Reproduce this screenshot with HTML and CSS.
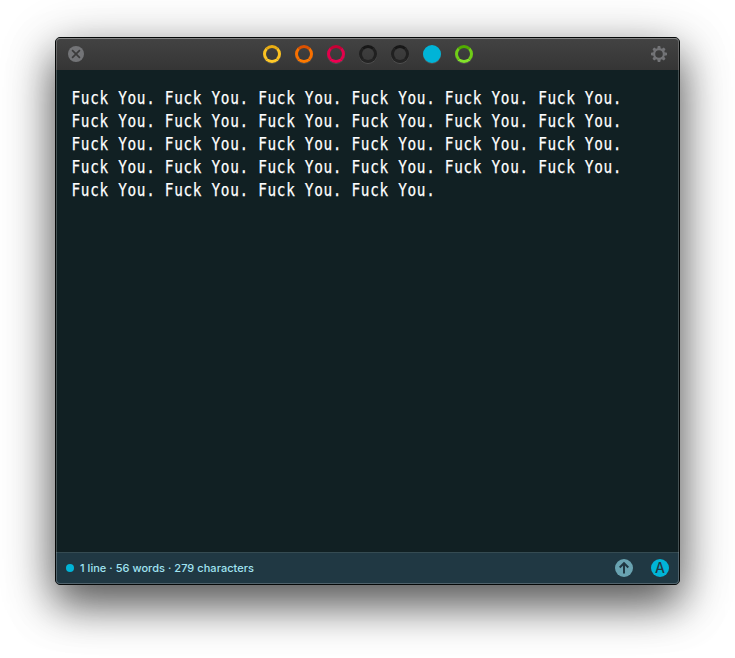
FILE: index.html
```html
<!DOCTYPE html>
<html lang="en">
<head>
<meta charset="utf-8">
<title>Notes</title>
<link rel="stylesheet" href="styles.css">
</head>
<body>
<main class="window">
  <header class="titlebar">
    <svg class="close" width="16" height="16" viewBox="0 0 16 16"><circle cx="8" cy="8" r="8" fill="#737477"/><path d="M4.1 4.1l7.8 7.8M11.9 4.1l-7.8 7.8" stroke="#3b3b3b" stroke-width="1.7"/></svg>
    <nav class="tabs">
      <span class="tab yellow"></span>
      <span class="tab orange"></span>
      <span class="tab red"></span>
      <span class="tab dark"></span>
      <span class="tab dark"></span>
      <span class="tab blue"></span>
      <span class="tab green"></span>
    </nav>
    <svg class="gear" width="16" height="16" viewBox="-8 -8 16 16" fill="#737477"><circle r="4.9" fill="none" stroke="#737477" stroke-width="2.2"/><g><path id="t" d="M-1.8-5.3L-1.2-8H1.2L1.8-5.3z"/><use href="#t" transform="rotate(45)"/><use href="#t" transform="rotate(90)"/><use href="#t" transform="rotate(135)"/><use href="#t" transform="rotate(180)"/><use href="#t" transform="rotate(225)"/><use href="#t" transform="rotate(270)"/><use href="#t" transform="rotate(315)"/></g></svg>
  </header>
  <section class="editor">
    <div class="line">Fuck You. Fuck You. Fuck You. Fuck You. Fuck You. Fuck You.</div>
    <div class="line">Fuck You. Fuck You. Fuck You. Fuck You. Fuck You. Fuck You.</div>
    <div class="line">Fuck You. Fuck You. Fuck You. Fuck You. Fuck You. Fuck You.</div>
    <div class="line">Fuck You. Fuck You. Fuck You. Fuck You. Fuck You. Fuck You.</div>
    <div class="line">Fuck You. Fuck You. Fuck You. Fuck You.</div>
  </section>
  <footer class="status">
    <span class="dot"></span>
    <span class="count">1 line · 56 words · 279 characters</span>
    <svg class="share" width="18" height="18" viewBox="0 0 18 18"><circle cx="9" cy="9" r="9" fill="#69a3b1"/><path d="M9 14.6V4.4M4.7 8.5L9 4.2l4.3 4.3" fill="none" stroke="#203843" stroke-width="2"/></svg>
    <span class="mode">A</span>
  </footer>
</main>
</body>
</html>
```
FILE: styles.css
```css
* { box-sizing: border-box; }
body {
  margin: 0;
  height: 658px;
  padding: 37px 55px;
  background: #fff;
  overflow: hidden;
}
.window {
  position: relative;
  display: flex;
  flex-direction: column;
  width: 625px;
  height: 548px;
  border: 1px solid #050808;
  border-radius: 5px;
  background: #112023;
  box-shadow: 0 20px 40px rgba(0, 0, 0, .53), 0 12px 56px rgba(0, 0, 0, .3);
}
.window::after {
  content: "";
  position: absolute;
  inset: 0;
  border: 1px solid rgba(255, 255, 255, .22);
  border-top-color: rgba(255, 255, 255, .36);
  border-radius: 4px;
  pointer-events: none;
}
.titlebar {
  display: flex;
  align-items: center;
  justify-content: space-between;
  height: 32px;
  padding: 0 12px;
  border-radius: 4px 4px 0 0;
  background: linear-gradient(#434343, #353535);
}
.tabs { display: flex; gap: 14px; }
.tab {
  width: 18px;
  height: 18px;
  border: 3px solid;
  border-radius: 50%;
  box-shadow: 0 1px 0 rgba(255, 255, 255, .12);
}
.yellow { border-color: #e9ad12 #fbc222 #ffc928; }
.orange { border-color: #db5100 #f87000 #ff7a00; }
.red { border-color: #c70035 #e3004b #ef0052; }
.dark { border-color: #171717 #202020 #242424; }
.blue { border-color: #00b4d7; background: #00b4d7; }
.green { border-color: #51ac00 #70cd17 #83e32a; }
.editor {
  flex: 1;
  padding: 16px 15px;
}
.line {
  width: max-content;
  height: 23px;
  font: 18px/23px "DejaVu Sans Mono", monospace;
  letter-spacing: .83px;
  color: #fff;
  white-space: pre;
  -webkit-text-stroke: .25px #fff;
  transform: translateX(.5px) scaleX(.8);
  transform-origin: 0 0;
}
.status {
  display: flex;
  align-items: center;
  height: 32px;
  padding: 0 10px 1px;
  border-top: 1px solid #354b52;
  border-radius: 0 0 4px 4px;
  background: #203843;
}
.dot {
  width: 8px;
  height: 8px;
  border-radius: 50%;
  background: #00b4d7;
}
.count {
  margin-left: 6px;
  font: 500 11px/16px Inter, sans-serif;
  letter-spacing: .04px;
  color: #a0e4f2;
}
.share { margin-left: auto; }
.mode {
  width: 18px;
  height: 18px;
  margin-left: 18px;
  border-radius: 50%;
  background: #00b4d7;
  color: #203843;
  font: 500 14px/18px Inter, sans-serif;
  text-align: center;
}
```
